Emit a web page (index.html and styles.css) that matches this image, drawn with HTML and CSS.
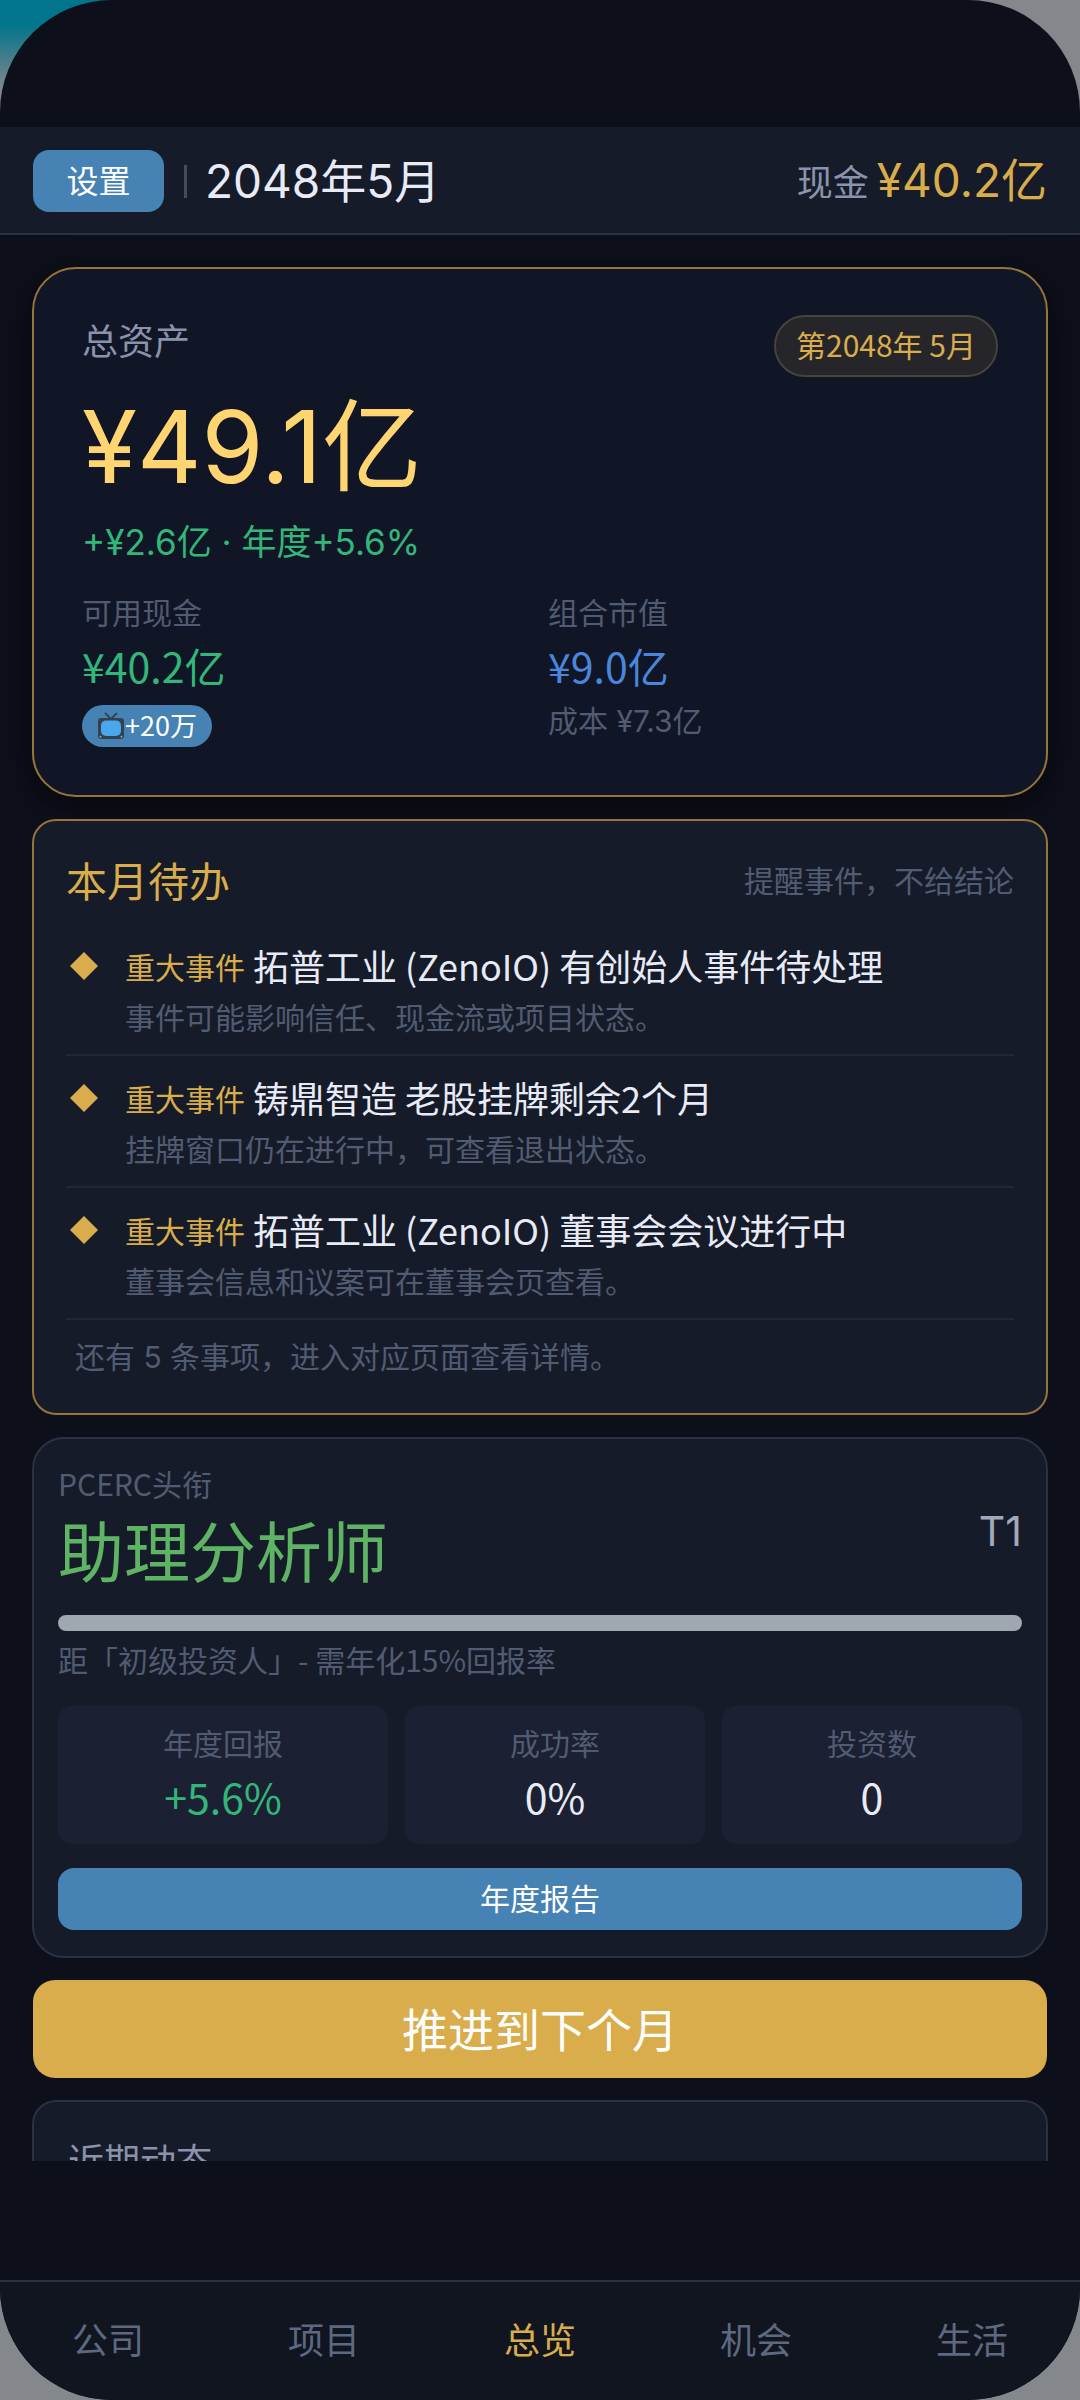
FILE: index.html
```html
<!DOCTYPE html>
<html lang="zh-CN">
<head>
<meta charset="utf-8">
<meta name="viewport" content="width=device-width, initial-scale=1">
<title>总览</title>
<link rel="stylesheet" href="styles.css">
</head>
<body>
<div class="app">
  <header class="topbar">
    <button class="btn btn-small" type="button">设置</button>
    <span class="topbar-rule"></span>
    <h1 class="topbar-date num">2048年5月</h1>
    <p class="topbar-cash"><span class="muted">现金</span><span class="cash-value num">¥40.2亿</span></p>
  </header>

  <main class="scroller">
    <section class="card assets">
      <div class="assets-head">
        <h2 class="assets-label">总资产</h2>
        <span class="period">第2048年 5月</span>
      </div>
      <p class="assets-total num">¥49.1亿</p>
      <p class="assets-change num">+¥2.6亿 · 年度+5.6%</p>
      <div class="assets-split">
        <div class="figure">
          <span class="caption">可用现金</span>
          <span class="value value-green">¥40.2亿</span>
          <span class="income">
            <svg class="tv" viewBox="0 0 28 28" aria-hidden="true">
              <path d="M8.500 1.500 L14 7 L19.500 1.500" fill="none" stroke="#33424f" stroke-width="1.800" stroke-linecap="round"/>
              <rect x="1" y="6" width="26" height="21" rx="3" fill="#33424f"/>
              <rect x="4" y="8.500" width="20" height="15.500" rx="5" fill="#4aa7ee"/>
              <circle cx="3.500" cy="24.800" r="1" fill="#8fa3b3"/>
              <circle cx="24.500" cy="24.800" r="1" fill="#8fa3b3"/>
            </svg>
            <span class="income-value">+20万</span>
          </span>
        </div>
        <div class="figure">
          <span class="caption">组合市值</span>
          <span class="value value-blue">¥9.0亿</span>
          <span class="caption num">成本 ¥7.3亿</span>
        </div>
      </div>
    </section>

    <section class="card todo">
      <div class="todo-head">
        <h2 class="todo-title">本月待办</h2>
        <span class="caption">提醒事件，不给结论</span>
      </div>
      <ul class="todo-list">
        <li class="todo-item">
          <span class="diamond"></span>
          <div>
            <p class="todo-line"><span class="tag">重大事件</span>拓普工业 (ZenoIO) 有创始人事件待处理</p>
            <p class="caption">事件可能影响信任、现金流或项目状态。</p>
          </div>
        </li>
        <li class="todo-item">
          <span class="diamond"></span>
          <div>
            <p class="todo-line"><span class="tag">重大事件</span>铸鼎智造 老股挂牌剩余2个月</p>
            <p class="caption">挂牌窗口仍在进行中，可查看退出状态。</p>
          </div>
        </li>
        <li class="todo-item">
          <span class="diamond"></span>
          <div>
            <p class="todo-line"><span class="tag">重大事件</span>拓普工业 (ZenoIO) 董事会会议进行中</p>
            <p class="caption">董事会信息和议案可在董事会页查看。</p>
          </div>
        </li>
      </ul>
      <p class="caption todo-more num">还有 5 条事项，进入对应页面查看详情。</p>
    </section>

    <section class="card rank">
      <div class="rank-head">
        <div>
          <p class="caption">PCERC头衔</p>
          <h2 class="rank-title">助理分析师</h2>
        </div>
        <span class="rank-tier num">T1</span>
      </div>
      <div class="progress" role="progressbar" aria-label="晋级进度" aria-valuenow="100"></div>
      <p class="caption">距「初级投资人」- 需年化15%回报率</p>
      <div class="stats">
        <div class="stat"><span class="caption">年度回报</span><span class="value value-green">+5.6%</span></div>
        <div class="stat"><span class="caption">成功率</span><span class="value">0%</span></div>
        <div class="stat"><span class="caption">投资数</span><span class="value">0</span></div>
      </div>
      <button class="btn" type="button">年度报告</button>
    </section>

    <button class="btn-next" type="button">推进到下个月</button>

    <section class="card news">
      <h2 class="news-title">近期动态</h2>
    </section>
  </main>

  <nav class="tabs">
    <a class="tab" href="#company">公司</a>
    <a class="tab" href="#projects">项目</a>
    <a class="tab tab-active" href="#overview" aria-current="page">总览</a>
    <a class="tab" href="#deals">机会</a>
    <a class="tab" href="#life">生活</a>
  </nav>
</div>
</body>
</html>
```
FILE: styles.css
```css
:root {
  --ground: #0d0f1a;
  --panel: #151b28;
  --line: #2a3145;
  --gold: #d9ad4b;
  --gold-line: #96753a;
  --blue: #4682b4;
  --green: #33b67a;
  --text: #e8eaf6;
  --soft: #8a93ab;
  --dim: #515b71;
}

* { box-sizing: border-box; }

body {
  margin: 0;
  background:
    linear-gradient(#00758c 0, #00758c 24px, #84868c 90px) left top / 50% 120px no-repeat,
    #84878c;
  color: var(--text);
  font-family: "Noto Sans CJK SC", sans-serif;
  font-size: 30px;
  line-height: 44px;
}

h1, h2, p, ul { margin: 0; padding: 0; font-weight: 400; }
button { border: 0; font: inherit; color: #fff; cursor: pointer; }

.num { font-family: Inter, "Noto Sans CJK SC", sans-serif; }
.muted { color: var(--soft); }
.caption { color: var(--dim); font-size: 30px; line-height: 44px; }

.app {
  display: flex;
  flex-direction: column;
  height: 100vh;
  padding-top: 127px;
  border-radius: 112px;
  background: var(--ground);
  overflow: hidden;
}

/* Top bar */
.topbar {
  display: flex;
  align-items: center;
  flex: none;
  height: 108px;
  padding: 2px 33px 0;
  background: var(--panel);
  border-bottom: 2px solid var(--line);
}
.btn {
  display: block;
  width: 100%;
  height: 62px;
  padding: 0 0 4px;
  border-radius: 16px;
  background: var(--blue);
}
.btn-small { width: 131px; font-size: 32px; }
.topbar-rule { width: 3px; height: 33px; margin: 0 18px 0 20px; background: #434b5e; }
.topbar-date { font-size: 46px; line-height: 60px; }
.topbar-cash {
  display: flex;
  align-items: center;
  gap: 8px;
  margin-left: auto;
  padding-bottom: 2px;
  font-size: 36px;
}
.cash-value { color: var(--gold); font-size: 46px; }

/* Scrolling content */
.scroller {
  display: flex;
  flex-direction: column;
  gap: 22px;
  flex: 1;
  min-height: 0;
  margin-bottom: 119px;
  padding: 32px 32px 0;
  overflow-y: auto;
  scrollbar-width: none;
}
.card {
  flex: none;
  border: 2px solid var(--line);
  border-radius: 24px;
  background: var(--panel);
}

/* Total assets */
.assets {
  padding: 46px 48px;
  border-color: var(--gold-line);
  border-radius: 44px;
  background: #101625;
  box-shadow: 0 10px 32px rgba(0, 0, 0, 0.5);
}
.assets-head { display: flex; justify-content: space-between; align-items: flex-start; }
.assets-label { color: var(--soft); font-size: 36px; line-height: 48px; }
.period {
  padding: 5px 20px 9px;
  border: 2px solid #47423c;
  border-radius: 32px;
  background: #26252a;
  color: var(--gold);
}
.assets-total { margin: 10px 0 8px; color: #ffd572; font-size: 100px; line-height: 120px; }
.assets-change { color: var(--green); font-size: 35px; line-height: 54px; }
.assets-split { display: grid; grid-template-columns: 1fr 1fr; gap: 16px; margin-top: 20px; }
.figure { display: flex; flex-direction: column; align-items: flex-start; }
.value { font-size: 41px; line-height: 60px; }
.value-green { color: var(--green); }
.value-blue { color: #4a86dc; }
.figure .value { margin: 2px 0 4px; }
.income {
  display: flex;
  align-items: center;
  margin-top: 6px;
  padding: 0 15px;
  border-radius: 21px;
  background: var(--blue);
  color: #fff;
  font-size: 27px;
  line-height: 40px;
}
.income-value { padding-bottom: 2px; }
.tv { width: 28px; height: 28px; }
.assets-split { padding-bottom: 2px; }

/* Monthly to-do */
.todo { padding: 28px 32px 34px; border-color: var(--gold-line); }
.todo-head { display: flex; justify-content: space-between; align-items: center; }
.todo-title { color: var(--gold); font-size: 41px; line-height: 60px; }
.todo-list { margin-top: 15px; list-style: none; }
.todo-item {
  display: flex;
  gap: 27px;
  height: 132px;
  padding: 14px 0 0 4px;
  border-bottom: 2px solid #202736;
}
.diamond {
  flex: none;
  width: 28px;
  height: 28px;
  margin-top: 14px;
  background: var(--gold);
  clip-path: polygon(50% 0, 100% 50%, 50% 100%, 0 50%);
}
.todo-line { margin-bottom: 2px; font-size: 36px; line-height: 54px; }
.tag { margin-right: 8px; color: var(--gold); font-size: 30px; line-height: 44px; vertical-align: 2px; }
.todo-more { margin: 15px 9px 0; }

/* Rank */
.rank { padding: 22px 24px 26px; border-radius: 32px; }
.rank-head { display: flex; justify-content: space-between; align-items: center; }
.rank-title { color: #5fb364; font-size: 66px; line-height: 86px; }
.rank-tier { margin-top: 10px; color: #a3a8b8; font-size: 41px; }
.progress { height: 16px; margin: 24px 0 6px; border-radius: 8px; background: #9fa8b1; }
.stats { display: flex; gap: 17px; margin: 25px 0 24px; }
.stat {
  display: flex;
  flex: 1 1 auto;
  flex-direction: column;
  align-items: center;
  padding: 14px 0 18px;
  border-radius: 14px;
  background: #1b2032;
}
.stat .value { margin-top: 2px; }

.btn-next {
  flex: none;
  height: 98px;
  margin: 0 1px;
  padding: 0 0 4px;
  border-radius: 22px;
  background: var(--gold);
  font-size: 46px;
}

.news { padding: 30px 34px 200px; }
.news-title { color: var(--soft); font-size: 36px; line-height: 54px; }

/* Bottom tabs */
.tabs {
  display: flex;
  flex: none;
  height: 120px;
  border-top: 2px solid var(--line);
  background: #111520;
}
.tab {
  flex: 1;
  color: #5d6980;
  font-size: 36px;
  line-height: 112px;
  text-align: center;
  text-decoration: none;
}
.tab-active { color: var(--gold); }
```
